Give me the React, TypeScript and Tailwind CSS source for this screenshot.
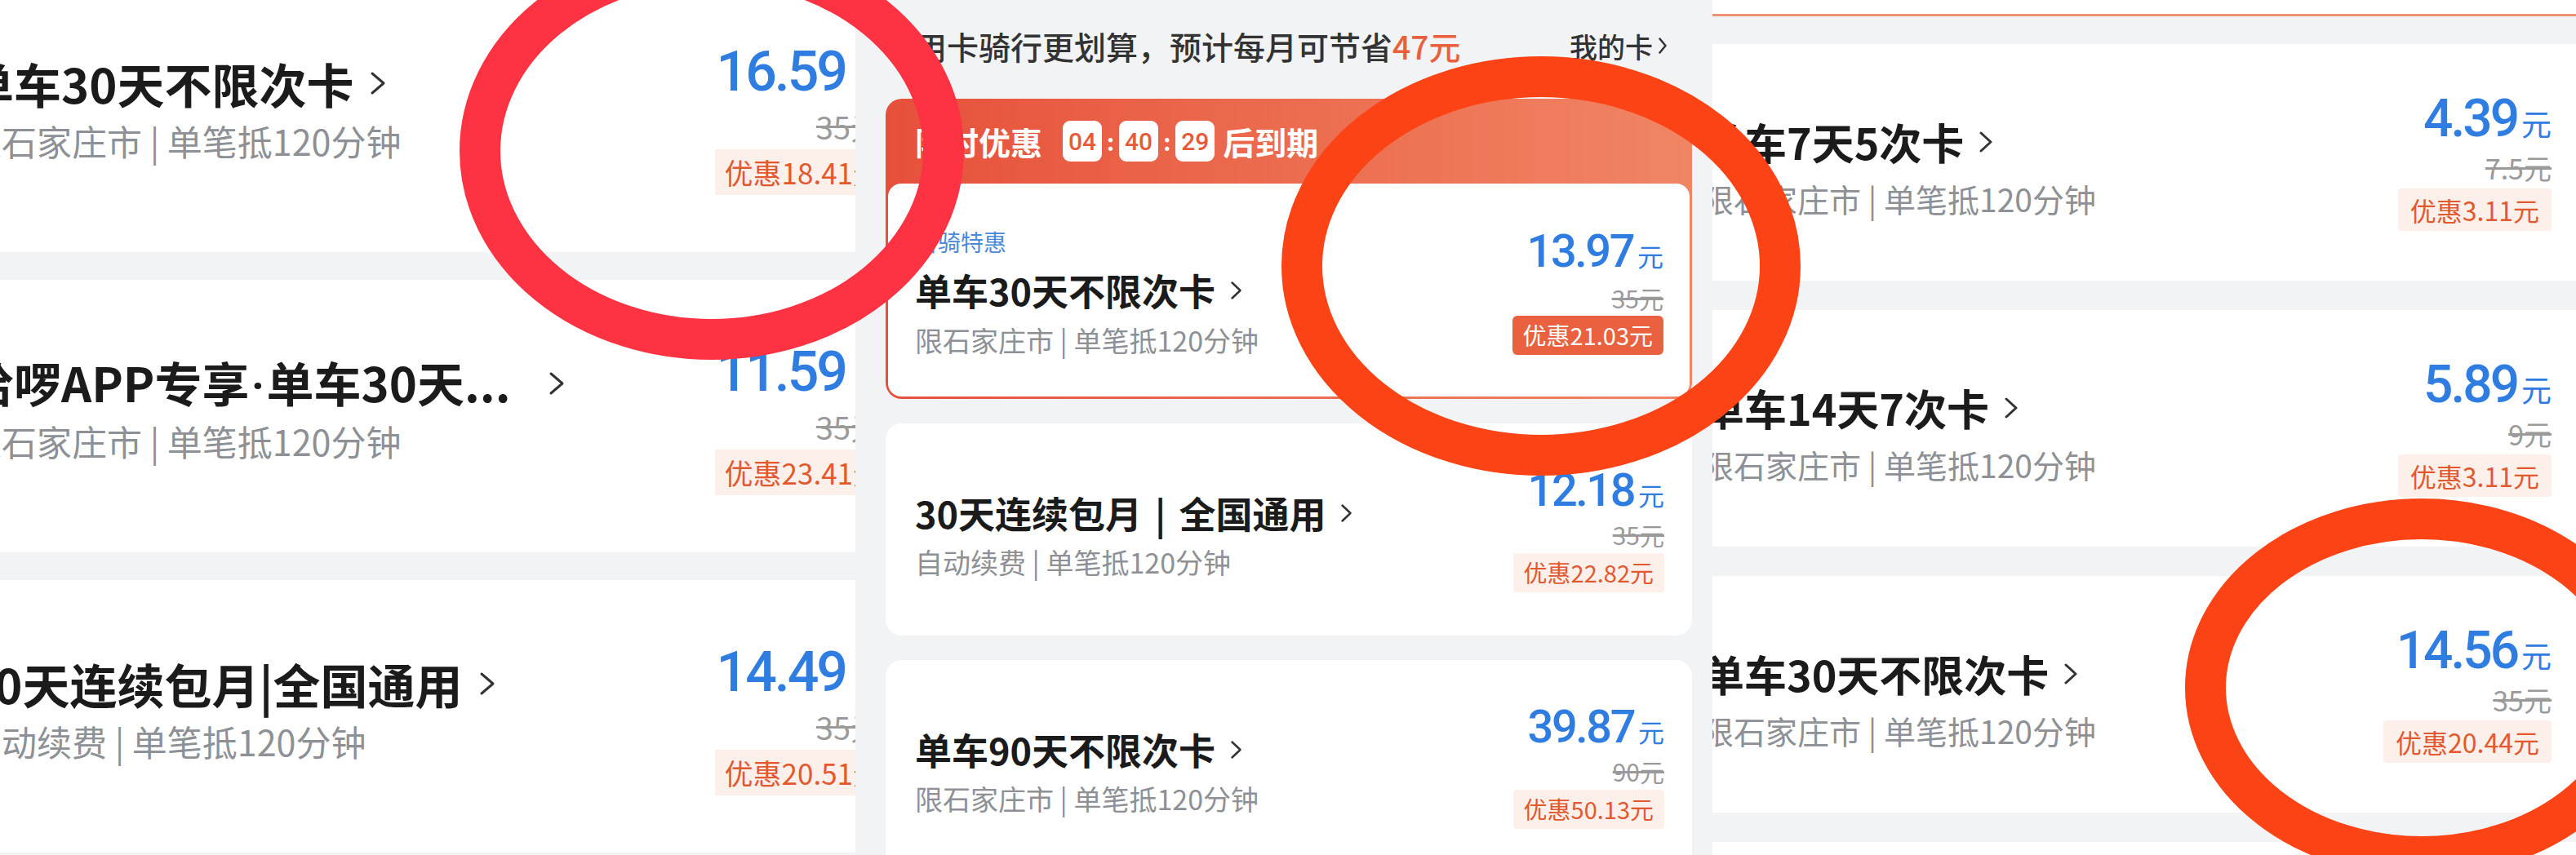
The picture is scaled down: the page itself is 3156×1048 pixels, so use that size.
import React from "react";

function Chevron({ w, h, sw, color }: { w: number; h: number; sw: number; color: string }) {
  return (
    <svg width={w} height={h} viewBox={`0 0 ${w} ${h}`} className="shrink-0">
      <polyline
        points={`${sw},${sw} ${w - sw},${h / 2} ${sw},${h - sw}`}
        fill="none"
        stroke={color}
        strokeWidth={sw}
        strokeLinecap="round"
        strokeLinejoin="round"
      />
    </svg>
  );
}

type Item = { title: React.ReactNode; sub: string; price: string; orig: string; save: string; chevGap?: number };

const leftItems: Item[] = [
  { title: "单车30天不限次卡", sub: "限石家庄市 | 单笔抵120分钟", price: "16.59", orig: "35元", save: "优惠18.41元" },
  {
    title: (
      <>
        哈啰APP专享<span className="font-['Roboto',sans-serif] mx-[2px]">·</span>单车30天...
      </>
    ),
    sub: "限石家庄市 | 单笔抵120分钟",
    price: "11.59",
    orig: "35元",
    save: "优惠23.41元",
    chevGap: 48,
  },
  { title: "30天连续包月|全国通用", sub: "自动续费 | 单笔抵120分钟", price: "14.49", orig: "35元", save: "优惠20.51元" },
];

const rightItems: Item[] = [
  { title: "单车7天5次卡", sub: "限石家庄市 | 单笔抵120分钟", price: "4.39", orig: "7.5元", save: "优惠3.11元" },
  { title: "单车14天7次卡", sub: "限石家庄市 | 单笔抵120分钟", price: "5.89", orig: "9元", save: "优惠3.11元" },
  { title: "单车30天不限次卡", sub: "限石家庄市 | 单笔抵120分钟", price: "14.56", orig: "35元", save: "优惠20.44元" },
];

function LeftCard({ it }: { it: Item }) {
  return (
    <div className="h-[334px] shrink-0 bg-white flex justify-between">
      <div className="pt-[94px] flex flex-col">
        <div className="h-[66px] flex items-center">
          <span className="text-[58px] leading-[66px] font-semibold text-[#1b1b1b] whitespace-nowrap">{it.title}</span>
          <span className={it.chevGap ? "ml-[46px]" : "ml-[20px]"}>
            <Chevron w={20} h={30} sw={3} color="#333333" />
          </span>
        </div>
        <div className="mt-[12px] text-[43px] leading-[50px] text-[#8d9095] whitespace-nowrap">{it.sub}</div>
      </div>
      <div className="pt-[78px] flex flex-col items-end">
        <div className="h-[70px] mr-[-10px] flex items-baseline text-[#2f7de1]">
          <span className="font-['Roboto',sans-serif] font-medium text-[68px] leading-[70px] tracking-[-3px]">{it.price}</span>
          <span className="ml-[14px] text-[40px]">元</span>
        </div>
        <div className="mt-[10px] text-[38px] leading-[44px] text-[#9a9a9a] line-through">{it.orig}</div>
        <div className="mt-[6px] mr-[-12px] h-[56px] px-[12px] flex items-center bg-[#fdefe9] text-[#e2592f] text-[35px] whitespace-nowrap">
          {it.save}
        </div>
      </div>
    </div>
  );
}

function MidCard({ title, sub, price, orig, save }: Item) {
  return (
    <div className="mt-[30px] h-[260px] shrink-0 bg-white rounded-[20px] flex justify-between pl-[36px] pr-[34px]">
      <div className="pt-[84px] flex flex-col">
        <div className="h-[52px] flex items-center">
          <span className="text-[45px] leading-[52px] font-semibold text-[#1b1b1b] whitespace-nowrap flex items-center">{title}</span>
          <span className="ml-[18px]">
            <Chevron w={15} h={24} sw={2.5} color="#333333" />
          </span>
        </div>
        <div className="mt-[14px] text-[34px] leading-[40px] text-[#8d9095] whitespace-nowrap">{sub}</div>
      </div>
      <div className="pt-[54px] flex flex-col items-end">
        <div className="h-[56px] flex items-baseline text-[#2f7de1]">
          <span className="font-['Roboto',sans-serif] font-medium text-[56px] leading-[56px] tracking-[-2.5px]">{price}</span>
          <span className="ml-[5px] text-[32px]">元</span>
        </div>
        <div className="mt-[8px] text-[30px] leading-[36px] text-[#9a9a9a] line-through">{orig}</div>
        <div className="mt-[5px] h-[48px] px-[13px] flex items-center bg-[#fdefe9] text-[#e2592f] text-[29px] whitespace-nowrap rounded-[4px]">
          {save}
        </div>
      </div>
    </div>
  );
}

function RightCard({ it }: { it: Item }) {
  return (
    <div className="h-[290px] shrink-0 bg-white overflow-hidden">
      <div className="ml-[-13px] pr-[30px] flex justify-between">
        <div className="pt-[90px] flex flex-col">
          <div className="h-[60px] flex items-center">
            <span className="text-[52px] leading-[60px] font-semibold text-[#1b1b1b] whitespace-nowrap">{it.title}</span>
            <span className="ml-[18px]">
              <Chevron w={18} h={28} sw={3} color="#333333" />
            </span>
          </div>
          <div className="mt-[16px] text-[39px] leading-[46px] text-[#8d9095] whitespace-nowrap">{it.sub}</div>
        </div>
        <div className="pt-[60px] flex flex-col items-end">
          <div className="h-[64px] flex items-baseline text-[#2f7de1]">
            <span className="font-['Roboto',sans-serif] font-medium text-[64px] leading-[64px] tracking-[-3px]">{it.price}</span>
            <span className="ml-[5px] text-[37px]">元</span>
          </div>
          <div className="mt-[8px] text-[34px] leading-[40px] text-[#9a9a9a] line-through">{it.orig}</div>
          <div className="mt-[5px] h-[52px] px-[15px] flex items-center bg-[#fdefe9] text-[#e2592f] text-[32px] whitespace-nowrap rounded-[4px]">
            {it.save}
          </div>
        </div>
      </div>
    </div>
  );
}

function TimeBox({ v }: { v: string }) {
  return (
    <div className="w-[48px] h-[50px] rounded-[9px] bg-white flex items-center justify-center text-[30px] font-medium text-[#e65a3a] font-['Roboto',sans-serif]">
      {v}
    </div>
  );
}

export default function App() {
  return (
    <div className="relative w-[3156px] h-[1048px] overflow-hidden flex bg-[#f2f3f5] font-['Noto_Sans_CJK_SC','Noto_Sans',sans-serif]">
      {/* LEFT PANEL */}
      <div className="w-[1048px] h-full shrink-0 overflow-hidden bg-[#f2f3f5]">
        <div className="ml-[-41px] mt-[-25px] w-[1121px] flex flex-col gap-[34px]">
          {leftItems.map((it, i) => (
            <LeftCard key={i} it={it} />
          ))}
        </div>
      </div>

      {/* MIDDLE PANEL */}
      <div className="w-[1050px] h-full shrink-0 overflow-hidden bg-[#f2f3f5] pl-[37px] pr-[25px] flex flex-col">
        <div className="h-[121px] shrink-0 pt-[33px] pl-[36px] pr-[30px] flex justify-between">
          <div className="text-[39px] leading-[46px] font-medium text-[#333333] whitespace-nowrap">
            用卡骑行更划算，预计每月可节省<span className="text-[#e9603d]">47元</span>
          </div>
          <div className="flex items-center h-[46px] text-[34px] font-medium text-[#333333]">
            我的卡
            <span className="ml-[6px]">
              <Chevron w={12} h={22} sw={2.5} color="#333333" />
            </span>
          </div>
        </div>

        <div className="h-[368px] shrink-0 rounded-[20px] bg-gradient-to-r from-[#e6503a] to-[#f08563] flex flex-col">
          <div className="h-[104px] shrink-0 pl-[36px] flex items-center text-white">
            <span className="text-[39px] font-bold">限时优惠</span>
            <div className="ml-[25px] flex items-center">
              <TimeBox v="04" />
              <span className="mx-[6px] text-[28px] font-bold">:</span>
              <TimeBox v="40" />
              <span className="mx-[6px] text-[28px] font-bold">:</span>
              <TimeBox v="29" />
            </div>
            <span className="ml-[10px] text-[39px] font-bold">后到期</span>
          </div>
          <div className="flex-1 mx-[3px] mb-[3px] rounded-[16px] bg-white flex justify-between pl-[33px] pr-[32px]">
            <div className="pt-[54px] flex flex-col">
              <div className="text-[28px] leading-[34px] text-[#4b8ad8]">首骑特惠</div>
              <div className="mt-[17px] h-[52px] flex items-center">
                <span className="text-[45px] leading-[52px] font-semibold text-[#1b1b1b] whitespace-nowrap">单车30天不限次卡</span>
                <span className="ml-[18px]">
                  <Chevron w={15} h={24} sw={2.5} color="#333333" />
                </span>
              </div>
              <div className="mt-[15px] text-[34px] leading-[40px] text-[#8d9095] whitespace-nowrap">限石家庄市 | 单笔抵120分钟</div>
            </div>
            <div className="pt-[55px] flex flex-col items-end">
              <div className="h-[56px] flex items-baseline text-[#2f7de1]">
                <span className="font-['Roboto',sans-serif] font-medium text-[56px] leading-[56px] tracking-[-2.5px]">13.97</span>
                <span className="ml-[5px] text-[32px]">元</span>
              </div>
              <div className="mt-[11px] text-[30px] leading-[36px] text-[#9a9a9a] line-through">35元</div>
              <div className="mt-[4px] h-[48px] px-[13px] flex items-center bg-[#e9613e] text-white text-[29px] whitespace-nowrap rounded-[6px]">
                优惠21.03元
              </div>
            </div>
          </div>
        </div>

        <MidCard
          title={
            <>
              30天连续包月<span className="mx-[16px]">|</span>全国通用
            </>
          }
          sub="自动续费 | 单笔抵120分钟"
          price="12.18"
          orig="35元"
          save="优惠22.82元"
        />
        <MidCard title="单车90天不限次卡" sub="限石家庄市 | 单笔抵120分钟" price="39.87" orig="90元" save="优惠50.13元" />
      </div>

      {/* RIGHT PANEL */}
      <div className="flex-1 h-full overflow-hidden bg-[#f2f3f5] flex flex-col">
        <div className="h-[17px] shrink-0 bg-white" />
        <div className="h-[3px] shrink-0 bg-[#ee9272]" />
        <div className="h-[34px] shrink-0" />
        <div className="flex flex-col gap-[36px]">
          {rightItems.map((it, i) => (
            <RightCard key={i} it={it} />
          ))}
          <div className="h-[290px] shrink-0 bg-white" />
        </div>
      </div>

      {/* annotation circles */}
      <svg className="absolute inset-0 pointer-events-none" width={3156} height={1048} viewBox="0 0 3156 1048">
        <ellipse cx={872} cy={185} rx={284} ry={231} fill="none" stroke="#fd3242" strokeWidth={50} />
        <ellipse cx={1888} cy={326} rx={293} ry={232} fill="none" stroke="#fc4316" strokeWidth={50} />
        <ellipse cx={2967} cy={843} rx={265} ry={207} fill="none" stroke="#fc4316" strokeWidth={50} />
      </svg>
    </div>
  );
}
